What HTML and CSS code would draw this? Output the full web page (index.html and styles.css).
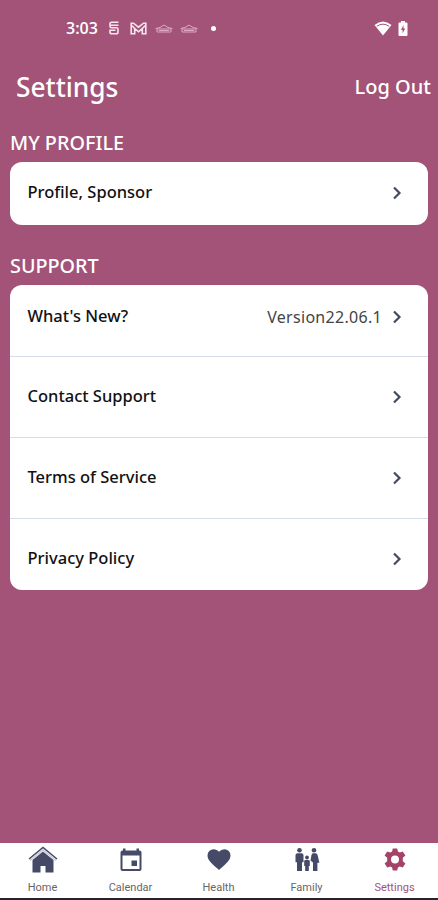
FILE: index.html
```html
<!DOCTYPE html>
<html lang="en">
<head>
  <meta charset="UTF-8">
  <title>Settings</title>
  <meta name="viewport" content="width=device-width, initial-scale=1.0">
  <link rel="stylesheet" href="styles.css">
</head>
<body>
  <div class="app">
    <div class="status-bar">
      <span class="time">3:03</span>
      <svg class="status-s" width="12" height="14" viewBox="0 0 12 14"><path d="M10.500 1.200H3.500Q2 1.200 2 3v2q0 1.700 1.500 1.700h5q1.500 0 1.500 1.600V11q0 1.800-1.800 1.800H3.800Q2 12.800 2 11V9.300h5.500M2 4.200h8.500" /></svg>
      <svg class="status-m" width="17" height="13" viewBox="0 0 17 13"><path d="M1.200 11.800V1.200h2.300l5 4 5-4h2.300v10.600h-3.500V6.500l-3.800 3.300-3.800-3.300v5.300zM4.700 6.500l-3-3M12.300 6.500l3-3" /></svg>
      <svg class="status-car" width="18" height="9" viewBox="0 0 18 9"><path d="M0.500 4.500L5 3.500l4-2.500 4 2.500 4.500 1" /><path d="M2 5h14v3H2z" /><path d="M4 6.500h10" /></svg>
      <svg class="status-car" width="18" height="9" viewBox="0 0 18 9"><path d="M0.500 4.500L5 3.500l4-2.500 4 2.500 4.500 1" /><path d="M2 5h14v3H2z" /><path d="M4 6.500h10" /></svg>
      <span class="dot"></span>
      <svg class="wifi" width="18" height="15" viewBox="0 0 18 15"><path class="fill" d="M0.500 4Q9-3 17.500 4L9 14.500z" /><path class="arc" d="M2.800 5.300Q9 1 15.200 5.300" /></svg>
      <svg class="battery" width="10" height="15" viewBox="0 0 10 15"><path class="fill" d="M3 0h4v1.500h1.500a1 1 0 0 1 1 1V14a1 1 0 0 1-1 1h-7a1 1 0 0 1-1-1V2.500a1 1 0 0 1 1-1H3z" /><path class="bolt" d="M5.500 4L3 9h1.600v3.500L7.200 7.500H5.500z" /></svg>
    </div>

    <header class="header">
      <h1>Settings</h1>
      <a class="logout">Log Out</a>
    </header>

    <main>
      <h2>MY PROFILE</h2>
      <div class="card">
        <div class="row">
          <span class="label">Profile, Sponsor</span>
          <svg class="chevron" width="10" height="14" viewBox="0 0 10 14"><path d="M2 1.500L7.500 7 2 12.500" /></svg>
        </div>
      </div>

      <h2 class="support-title">SUPPORT</h2>
      <div class="card">
        <div class="row">
          <span class="label">What's New?</span>
          <span class="version">Version22.06.1</span>
          <svg class="chevron" width="10" height="14" viewBox="0 0 10 14"><path d="M2 1.500L7.500 7 2 12.500" /></svg>
        </div>
        <div class="row">
          <span class="label">Contact Support</span>
          <svg class="chevron" width="10" height="14" viewBox="0 0 10 14"><path d="M2 1.500L7.500 7 2 12.500" /></svg>
        </div>
        <div class="row">
          <span class="label">Terms of Service</span>
          <svg class="chevron" width="10" height="14" viewBox="0 0 10 14"><path d="M2 1.500L7.500 7 2 12.500" /></svg>
        </div>
        <div class="row">
          <span class="label">Privacy Policy</span>
          <svg class="chevron" width="10" height="14" viewBox="0 0 10 14"><path d="M2 1.500L7.500 7 2 12.500" /></svg>
        </div>
      </div>
    </main>

    <nav class="tabs">
      <a class="tab">
        <svg width="30" height="28" viewBox="0 0 30 28"><path d="M15 5.500L25.500 14v12.500h-8V20h-5v6.500h-8V14z" /><path class="roof-gap" d="M2 14.500L15 4l13 10.500" /><path class="roof" d="M1 13L15 1.500 29 13" /></svg>
        <span>Home</span>
      </a>
      <a class="tab">
        <svg width="30" height="28" viewBox="0 0 30 28"><path fill-rule="evenodd" d="M7 2.500h2.500v2h11v-2H23v2h.5a2 2 0 0 1 2 2V23a2 2 0 0 1-2 2h-17a2 2 0 0 1-2-2V6.500a2 2 0 0 1 2-2H7zM6.500 9.500V23h17V9.500z" /><path d="M15.500 14.500H21V20h-5.500z" /></svg>
        <span>Calendar</span>
      </a>
      <a class="tab">
        <svg width="30" height="28" viewBox="0 0 30 28"><path d="M15 24l-1.600-1.500C7.500 17.300 3.500 13.800 3.500 9.400a6.100 6.100 0 0 1 6.200-6.200c2 0 4 .9 5.300 2.500a7 7 0 0 1 5.300-2.500 6.100 6.100 0 0 1 6.200 6.200c0 4.400-4 7.900-9.900 13.100z" /></svg>
        <span>Health</span>
      </a>
      <a class="tab">
        <svg width="30" height="28" viewBox="0 0 30 28"><circle cx="7.500" cy="4.300" r="2.300" /><path d="M5.500 7.300h4q2 0 2 2v7H10V25H5v-8.700H3.500v-7q0-2 2-2z" /><circle cx="22" cy="4.300" r="2.300" /><path d="M21 7.300h2.500q1.500 0 2 1.500l1.900 8h-2V25H21v-8.500L18.500 14.500 19.500 9q.3-1.700 1.500-1.700z" /><circle cx="15" cy="11.500" r="1.900" /><path d="M13.500 14h3q1.300 0 1.300 1.300V20h-1v5h-3.600v-5h-1v-4.700q0-1.300 1.300-1.300z" /></svg>
        <span>Family</span>
      </a>
      <a class="tab active">
        <svg width="30" height="28" viewBox="0 0 30 28"><path fill-rule="evenodd" d="M12.800 2.500h4.400l.7 3 1.900 1.100 2.900-1 2.700 4-2.600 2.100v3.600l2.600 2.100-2.700 4-2.900-1-1.900 1.100-.7 3h-4.400l-.7-3-1.900-1.100-2.900 1-2.700-4 2.600-2.100v-3.600L4.600 9.600l2.700-4 2.900 1 1.900-1.100zM15 9.500a4 4 0 1 0 0 8 4 4 0 0 0 0-8z" /></svg>
        <span>Settings</span>
      </a>
    </nav>
  </div>
</body>
</html>
```
FILE: styles.css
```css
* {
  box-sizing: border-box;
}
body {
  margin: 0;
  font-family: "Noto Sans", sans-serif;
}
.app {
  display: flex;
  flex-direction: column;
  height: 100vh;
  background-color: #a35377;
  color: #fff;
}
.status-bar {
  display: flex;
  align-items: center;
  height: 56px;
  padding: 0 30px 0 66px;
}
.status-bar svg {
  fill: none;
  stroke: #f8e4ed;
  stroke-width: 1.6;
}
.time {
  width: 42px;
  font-family: "Open Sans", sans-serif;
  font-size: 16px;
  font-weight: 600;
  white-space: nowrap;
}
.status-m {
  margin: 0 8px 0 10px;
}
.status-bar .status-car {
  margin-right: 7px;
  stroke: #dda9c2;
  stroke-width: 1;
}
.dot {
  width: 5px;
  height: 5px;
  margin-left: 6px;
  border-radius: 50%;
  background-color: #fff;
}
.wifi {
  margin-left: auto;
}
.battery {
  margin-left: 6px;
}
.status-bar .fill {
  fill: #fff;
  stroke: none;
}
.status-bar .arc {
  stroke: #a35377;
  stroke-width: 1;
}
.status-bar .bolt {
  fill: #a35377;
  stroke: none;
}
.header {
  display: flex;
  justify-content: space-between;
  align-items: center;
  height: 62px;
  padding: 0 7px 0 16px;
}
h1 {
  margin: 0;
  font-size: 26.3px;
  font-weight: 500;
}
.logout {
  margin-bottom: 2px;
  font-size: 20px;
  font-weight: 500;
}
main {
  flex: 1;
  padding: 11px 10px 0;
}
h2 {
  margin: 0;
  height: 33px;
  font-size: 19.8px;
  font-weight: 500;
  line-height: 28px;
  white-space: nowrap;
}
.support-title {
  margin-top: 27px;
}
.card {
  overflow: hidden;
  border-radius: 12px;
  background-color: #fff;
  color: #111;
}
.row {
  display: flex;
  align-items: center;
  height: 81px;
  padding: 0 26px 0 17.5px;
  border-top: 1px solid #d5dcea;
}
.row:first-child {
  height: 71px;
  padding-bottom: 8px;
  border-top: none;
}
.row:last-child {
  height: 72px;
  padding-top: 8px;
}
.row:only-child {
  height: 63px;
  padding-top: 0;
  padding-bottom: 2px;
}
.label {
  flex: 1;
  margin-bottom: 3px;
  font-size: 16.5px;
  font-weight: 500;
}
.version {
  margin-right: 10px;
  color: #444;
  font-size: 16px;
  letter-spacing: 0.3px;
}
.chevron {
  fill: none;
  stroke: #454b60;
  stroke-width: 2.2;
}
.tabs {
  display: grid;
  grid-template-columns: repeat(5, 88px);
  justify-content: center;
  height: 57px;
  border-bottom: 2px solid #25232b;
  background-color: #fff;
}
.tab {
  display: flex;
  flex-direction: column;
  align-items: center;
  gap: 4px;
  padding-top: 3px;
  color: #666;
  font-family: Roboto, sans-serif;
  font-size: 11px;
  line-height: 20px;
}
.tab svg {
  margin-right: 1px;
  fill: #454b66;
}
.tab span {
  margin-right: 1px;
}
.tab .roof {
  fill: none;
  stroke: #454b66;
  stroke-width: 1.5;
}
.tab .roof-gap {
  fill: none;
  stroke: #c9cbd5;
  stroke-width: 1.5;
}
.tab.active {
  color: #a35377;
}
.tab.active svg {
  fill: #a34368;
}
```
